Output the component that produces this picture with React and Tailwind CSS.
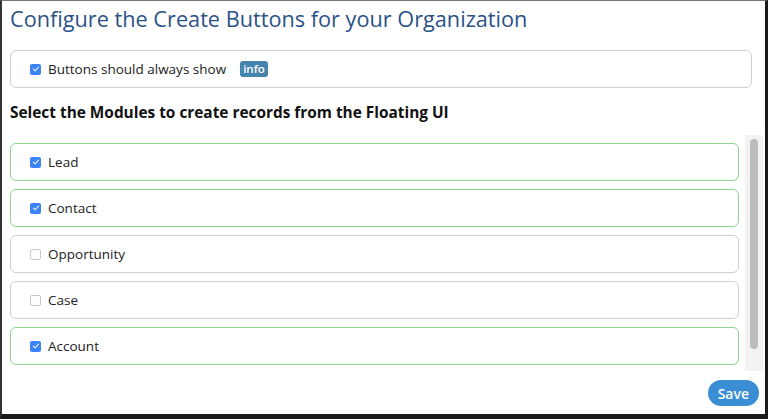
import React from "react";

const modules = [
  { name: "Lead", checked: true },
  { name: "Contact", checked: true },
  { name: "Opportunity", checked: false },
  { name: "Case", checked: false },
  { name: "Account", checked: true },
];

function Check({ checked }) {
  if (checked) {
    return (
      <span className="flex h-[11px] w-[11px] items-center justify-center rounded-[2px] bg-[#3b82f6]">
        <svg width="8" height="8" viewBox="0 0 8 8" fill="none">
          <path d="M1.5 4.2 3.2 5.8 6.5 2.2" stroke="#dbeafe" strokeWidth="1.2" strokeLinecap="round" strokeLinejoin="round" />
        </svg>
      </span>
    );
  }
  return <span className="h-[11px] w-[11px] rounded-[2px] border border-[#c8c8c8] bg-white" />;
}

export default function App() {
  return (
    <div
      className="flex h-[419px] w-[768px] flex-col border-t border-b-[5px] border-l-2 border-r-[3px] border-t-[#777] border-b-[#1a1a1a] border-l-[#333] border-r-[#1a1a1a] bg-white pl-2 pr-[2px] text-[#222]"
      style={{ fontFamily: '"Open Sans", "Noto Sans", sans-serif' }}
    >
      <h1 className="mt-[3px] text-[21.7px] leading-[30px] font-normal text-[#2a5287]">
        Configure the Create Buttons for your Organization
      </h1>

      <div className="mt-[16px] mr-[11px] flex h-[38px] items-center rounded-md border border-[#cfcfcf] pl-[19px]">
        <Check checked />
        <span className="ml-[7px] text-[13.5px]">Buttons should always show</span>
        <span className="ml-[14px] rounded-[3px] bg-[#4584ad] px-[3px] text-[11.5px] leading-[16px] font-semibold text-white">
          info
        </span>
      </div>

      <h2 className="mt-[14px] text-[15.4px] leading-[22px] font-bold text-[#111]">
        Select the Modules to create records from the Floating UI
      </h2>

      <div className="mt-[11px] flex h-[236px] gap-[6px]">
        <div className="flex flex-1 flex-col gap-2 overflow-hidden pt-2">
          {modules.map((m) => (
            <div
              key={m.name}
              className={`flex h-[38px] shrink-0 items-center rounded-md border pl-[19px] ${
                m.checked ? "border-[#8fd58f]" : "border-[#cfcfcf]"
              }`}
            >
              <Check checked={m.checked} />
              <span className="ml-[7px] text-[13.5px]">{m.name}</span>
            </div>
          ))}
        </div>
        <div className="flex w-[18px] justify-center bg-[#f3f3f3] pt-1">
          <div className="h-[210px] w-[8px] rounded-full bg-[#bdbdbd]" />
        </div>
      </div>

      <div className="mt-[9px] mr-[4px] flex justify-end">
        <button className="h-[26px] rounded-full bg-[#3a8ed3] px-[10px] text-[14px] font-semibold text-white">
          Save
        </button>
      </div>
    </div>
  );
}
